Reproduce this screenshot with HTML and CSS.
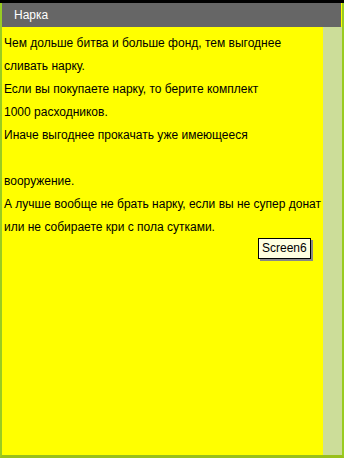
FILE: index.html
```html
<!DOCTYPE html>
<html>
<head>
<title>Нарка</title>
<link rel="stylesheet" href="styles.css">
</head>
<body>
<div class="frame">
  <div class="topline"></div>
  <div class="title">Нарка</div>
  <div class="main">
    <div class="content">
      <div class="line">Чем дольше битва и больше фонд, тем выгоднее</div>
      <div class="line">сливать нарку.</div>
      <div class="line">Если вы покупаете нарку, то берите комплект</div>
      <div class="line">1000 расходников.</div>
      <div class="line">Иначе выгоднее прокачать уже имеющееся</div>
      <div class="line"></div>
      <div class="line">вооружение.</div>
      <div class="line">А лучше вообще не брать нарку, если вы не супер донат</div>
      <div class="line">или не собираете кри с пола сутками.</div>
      <div class="tip">Screen6</div>
    </div>
    <div class="scroll"></div>
  </div>
</div>
</body>
</html>
```

FILE: styles.css
```css
html, body {
  margin: 0;
  padding: 0;
}
body {
  width: 344px;
  height: 458px;
  font-family: "Liberation Sans", Arial, sans-serif;
  font-size: 12px;
}
.frame {
  box-sizing: border-box;
  width: 344px;
  height: 458px;
  border: 2px solid #99cc22;
  border-top: none;
  border-bottom: 3px solid #99c01a;
  display: flex;
  flex-direction: column;
  background: #ffff00;
}
.topline {
  height: 3px;
  background: #000;
  margin: 0 -2px;
}
.title {
  height: 24px;
  line-height: 24px;
  background: #666666;
  color: #fff;
  padding-left: 12px;
  font-size: 12px;
  margin-right: 1px;
}
.main {
  flex: 1;
  display: flex;
}
.content {
  flex: 1;
  position: relative;
  background: #ffff00;
  color: #000;
  padding-top: 5px;
  padding-left: 2px;
}
.line {
  height: 23px;
  line-height: 23px;
  white-space: nowrap;
}
.scroll {
  width: 19px;
  background: #ccdd99;
}
.tip {
  position: absolute;
  left: 256px;
  top: 211px;
  background: #ffffe1;
  border: 1px solid #000;
  padding: 2px 3px;
  line-height: 15px;
  box-shadow: 2px 2px 0 #888;
}
```
